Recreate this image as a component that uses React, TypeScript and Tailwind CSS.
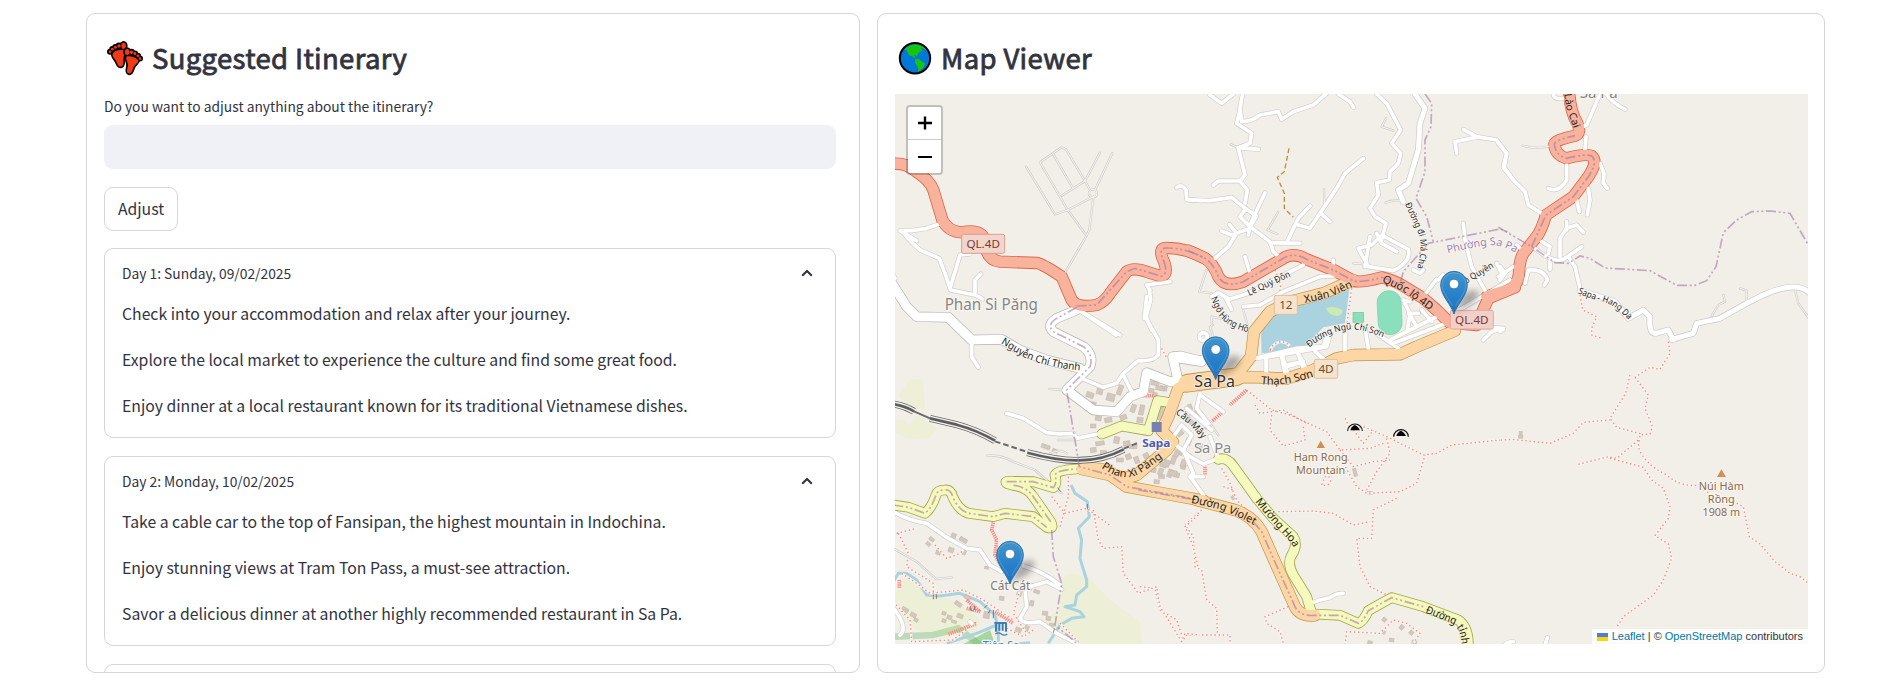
import React from "react";

const SHEETS = {
  nw: [880, 0],
  n: [1190, 80],
  ne: [1500, 0],
  sw: [880, 300],
  s: [1140, 320],
  se: [1480, 340],
} as const;
type Sheet = keyof typeof SHEETS;

const place = (s: Sheet) => `translate(${SHEETS[s][0]} ${SHEETS[s][1]}) scale(0.33333)`;

type Kind = "service" | "minor" | "street" | "major" | "yellow" | "orange" | "plaza" | "trunk";
const KINDS: Record<Kind, { casing: string; fill: string; outer: number; inner: number }> = {
  service: { casing: "#cfcdca", fill: "#f7f6f3", outer: 7, inner: 3 },
  minor: { casing: "#d0cecb", fill: "#ffffff", outer: 15, inner: 11 },
  street: { casing: "#cbc9c7", fill: "#ffffff", outer: 19, inner: 15 },
  major: { casing: "#b5b3b1", fill: "#ffffff", outer: 31, inner: 27 },
  yellow: { casing: "#a3a84c", fill: "#f6f9bd", outer: 32, inner: 27 },
  orange: { casing: "#c19445", fill: "#fcd6a4", outer: 37, inner: 33 },
  plaza: { casing: "#c19445", fill: "#fcd6a4", outer: 56, inner: 51 },
  trunk: { casing: "#d9674c", fill: "#f9b29c", outer: 37, inner: 32 },
};

const ROADS: [Sheet, Kind, string][] = [
  ["nw", "service", "M438,500 L525,643 L563,630 L640,590 M480,487 L563,630 L618,705 M480,487 L545,442 L558,448 L615,543 L545,587 M520,463 L580,567 M615,543 L660,458 M697,460 L645,570 M615,543 L630,570 M627,580 a12,12 0 1 0 24,0 a12,12 0 1 0 -24,0 M640,592 L628,690 L618,710 L555,818"],
  ["sw", "service", "M322,467 Q360,463 400,485 L465,510 L545,580 M508,267 L548,270 M535,420 L590,420 M510,460 Q540,445 560,460 M40,745 L110,785 L168,837 L215,832"],
  ["n", "service", "M265,395 L233,450 L262,462 M402,328 L403,375 M588,115 L575,140 L610,152 M587,368 Q605,360 630,362 M50,570 L28,635 L65,640 M490,550 L535,553 M68,735 L60,740 L75,790 M160,690 L175,745 M123,193 L145,203"],
  ["ne", "service", "M68,437 Q110,450 150,438 M635,948 L655,915 L675,905 L670,885 M720,865 L740,872 L740,900 M885,870 L895,910 L930,960"],
  ["s", "service", "M215,10 L215,-10 L260,0 M235,345 L210,310"],

  ["nw", "minor", "M178,672 L140,685 L95,692 L60,692 L110,722 M68,695 Q90,725 120,750 L178,775 L195,820 L212,870 L285,885 L308,897 M210,865 L240,765 L270,762 M285,885 L285,840 L302,822 M605,935 L720,1005 M810,870 L800,855 L870,845 M808,868 L812,900 L798,950 L815,990 M890,563 Q905,550 918,570 L920,598 L965,602 M40,825 L45,835"],
  ["sw", "minor", "M795,50 L835,120 L835,165 Q820,185 775,182 L730,220 L710,250 L670,262 L605,235 M800,-10 L793,55 M730,225 L755,275 M605,35 L708,105 M380,340 L430,355 L500,398 L540,402 L580,400 L590,415 L655,402 M275,120 L275,170 L295,202 M40,635 Q80,660 140,670 L200,712 L260,745 L300,750 L330,795 L365,815 M430,798 Q490,815 540,855 M545,868 L500,845 L435,865 L440,920 L420,955 Q430,975 480,965 L530,1000 L590,1030 M45,930 Q85,985 60,1005 M270,965 L275,970"],
  ["n", "minor", "M160,30 L150,85 L155,125 Q185,125 210,105 L265,95 L275,118 L310,95 L370,75 L410,40 M140,130 L150,90 M140,130 L185,160 L180,190 L145,203 L205,208 M145,205 L155,245 L165,285 L150,303 L85,303 L70,315 M150,303 L172,330 L165,370 M60,45 L95,70 L130,42 M445,42 L480,65 L490,82 M560,42 L590,70 L632,150 L605,190 L632,220 L625,250 L600,275 L598,300 L560,308 L565,345 L540,385 L555,410 L588,430 L575,480 M820,148 L860,170 L920,180 L950,220 L940,260 L960,285 M858,172 L795,185 L800,220 M-5,360 L60,362 L125,352 L165,385 L200,408 L180,440 L150,410 L168,385 M225,338 L180,435 L175,465 M180,440 L240,485 L250,515 L265,530 M180,445 L125,465 L95,453 M118,433 L140,460 L115,500 L75,535 M240,488 L330,490 M290,488 L325,415 L360,378 M325,435 L360,445 L390,400 L440,325 L465,280 L520,235 M390,398 L420,425 M165,530 L180,580 M118,658 L85,638 L65,650 M105,650 L125,688 M118,658 L175,640 L340,555 M160,680 L210,675 L280,635 L390,590 L465,585 M430,540 L430,570 M525,560 L540,470 M505,505 L545,495 L575,465 L655,508 Q665,545 610,572 L535,560 L505,505 M560,460 L575,490 L620,515 M670,570 L690,580 L700,570 M738,600 L700,650 M745,600 L760,585 M820,430 L825,480 L845,560 L890,640 M790,700 L960,600 M640,660 L660,700 L652,750 M640,662 L660,665 M655,700 L685,700 M695,690 L725,725 M680,740 L660,705 M600,780 L750,705 M610,790 L780,725 M535,805 L525,745 M465,820 L465,745 M560,760 L625,805 M920,550 L935,580 M28,770 a12,12 0 1 0 24,0 a12,12 0 1 0 -24,0 M880,780 L905,755 L940,745 M935,745 L870,740"],
  ["n", "minor", "M195,835 L320,805 L400,800 L410,765 M230,830 L228,885 M275,820 L295,885 M290,860 L340,845 M320,810 L345,860 M370,805 L395,835"],
  ["n", "street", "M675,42 L705,85 L690,130 L685,210 L655,310 L625,330 L640,365"],
  ["n", "street", "M-5,843 L50,833"],
  ["ne", "minor", "M305,270 L260,375 L245,382 M315,275 Q330,305 375,328 M160,280 Q160,300 190,295 M258,410 L255,450 M200,495 L200,540 Q175,580 145,565 M300,490 L312,520 L310,550 L322,565 M265,565 L270,600 L262,645 M230,600 L238,635 M-5,430 L20,460 L12,505 L40,540 L75,575 L85,615 L125,640 M50,735 L80,760 M125,725 L150,740 L145,760 M105,745 Q165,795 195,775 L245,740 M180,770 L180,715 L200,685 L230,675 L250,697 M150,785 L150,808 M200,665 L200,690 M85,810 L75,850 M85,810 Q130,805 143,840 L133,855 M0,800 L15,820 L0,840 M-5,830 L40,800 M205,770 L225,800 L240,865 M0,995 L10,988"],
  ["ne", "street", "M240,872 L300,890 L345,905 L385,955 L430,930 L450,950 Q445,1010 475,998 L505,990 L520,1020 M515,1018 L580,1000 L590,970 L660,955 L740,910 L790,885 Q890,840 930,880"],
  ["s", "minor", "M180,220 L170,265 L205,310 M180,225 L250,275 M140,265 L215,330 M210,350 L235,415 L190,432 L150,410 L105,372 M100,350 L125,315 L155,345 L130,390 L160,460 L150,470 L190,525 M160,470 L190,470 M378,115 L380,165 M425,110 L435,160 M470,90 L490,145 M440,135 L490,125 M350,115 L420,105 L560,80 L570,45 M525,95 L550,115"],
  ["se", "minor", "M70,920 Q80,905 100,905 M195,915 L202,893"],
  ["s", "minor", "M510,850 L540,840 L570,833 Q585,820 610,820"],

  ["nw", "major", "M30,840 L80,920 L110,950 L205,952 L275,1020"],
  ["sw", "major", "M205,52 L275,120 L365,118 L420,150 M420,150 L500,180 L600,205"],
  ["sw", "major", "M590,30 L530,55 Q498,75 520,95 L610,140 Q642,165 630,200 L560,270 L600,300 L640,330 L710,335 L750,290 L790,275 L800,218 L870,245 L895,245 L878,170 L900,168 L960,182"],
  ["s", "major", "M100,112 L185,125"],

  ["sw", "yellow", "M40,615 L85,622 L135,640 Q155,625 168,585 Q172,570 195,570 Q212,568 218,590 Q235,630 265,640 L340,650 L375,640 L460,650 L500,682 Q525,690 512,665 L460,590 Q440,560 400,556 L380,550 Q370,542 400,544 L460,545 L520,563 Q532,550 525,525 Q530,510 590,507"],
  ["sw", "yellow", "M665,402 L725,378 L805,392 L833,302 L870,308"],
  ["s", "yellow", "M235,418 Q260,410 280,438 L350,535 L400,595 L460,650 Q475,675 455,705 Q440,730 460,765 L500,830 L515,880"],
  ["s", "yellow", "M520,882 L600,886 L655,910 Q670,905 685,872 L755,833 L850,860 L955,900 Q985,920 985,975"],

  ["s", "plaza", "M140,190 L290,170"],
  ["sw", "orange", "M605,507 L690,525 L740,560 L860,582 L970,602"],
  ["sw", "orange", "M620,502 L680,510 Q720,545 770,525 L860,450 L878,425 L845,392 L865,350 L895,265 L960,235"],
  ["s", "orange", "M170,540 L285,570 Q340,590 365,635 L420,760 L465,860 Q480,890 525,886"],
  ["s", "orange", "M280,172 L350,172 L440,176 L520,150 L590,115 L640,105 L780,103 L830,80 L945,32"],
  ["n", "orange", "M140,885 L183,830 L192,755 L240,695 L300,665 L400,640 L490,600"],

  ["nw", "trunk", "M20,495 Q70,482 105,512 Q150,540 160,570 L187,660 Q205,695 245,697 Q310,685 315,725 Q318,780 360,785 L470,789 Q485,790 545,830 L575,900 Q590,925 650,915 Q675,905 690,880 L740,815 Q760,800 805,817 L845,829 Q865,820 852,785 Q830,740 865,744 Q920,745 975,775"],
  ["n", "trunk", "M-5,512 L45,535 Q70,550 85,590 Q105,625 160,605 L280,535 Q310,515 350,538 L430,570 L490,602 Q510,610 575,592 Q610,600 640,618 L700,655 L740,690 L775,725"],
  ["n", "trunk", "M780,728 L860,735 L895,655 L975,622"],
  ["ne", "trunk", "M-40,890 L15,872 Q55,860 57,820 Q58,780 70,760 L110,710 Q125,690 138,645 L220,590 L265,530 Q295,485 275,468 Q260,460 200,475 Q165,465 163,432 Q165,420 225,407 Q245,400 232,370 Q210,335 207,270"],
];

const ADMIN: [Sheet, string][] = [
  ["nw", "M590,918 L650,915 L740,815 L765,805 L845,829 Q865,820 852,785 Q830,740 865,744 Q920,745 975,775"],
  ["n", "M-5,512 L45,535 Q70,550 85,590 Q105,625 160,605 L280,535 Q310,515 350,538 L430,570 L490,602 Q510,610 575,592 L630,612 L640,575 L715,490 L930,447 L960,458"],
  ["n", "M705,42 L725,70 L723,140 L705,180 L705,275 L678,355 L710,410 L730,485"],
  ["ne", "M-5,682 L95,740 L165,788 L205,790 L240,768 L270,775 L315,804 L450,812 L530,856 L585,856 L620,842 L648,800 L670,698 L710,660 L755,635 L810,633 L870,640 L925,735"],
  ["ne", "M95,740 L138,645 L220,590 L265,530 Q295,485 275,468 Q260,460 200,475 Q165,465 163,432 Q165,420 225,407"],
  ["sw", "M590,22 L530,55 Q498,75 520,95 L610,140 Q642,165 630,200 L560,270 L598,500 L690,525 L740,560 L960,600"],
  ["sw", "M40,615 L85,622 L135,640 Q155,625 168,585 Q172,570 195,570 Q212,568 218,590 Q235,630 265,640 L340,650 L375,640 L460,650 L500,682 M515,690 L520,770 L545,850 L525,975 L590,1030 M512,665 L460,590 Q440,560 400,556 M380,545 L460,545 L520,563 Q532,550 525,525 Q530,510 590,507"],
  ["s", "M-5,510 L170,540 M340,605 L365,635 L420,760 L465,860 Q480,890 525,886 L600,886 L655,910 Q670,905 685,872 L755,833 L850,860"],
];

const PATHS: [Sheet, string][] = [
  ["n", "M255,570 L272,615 L270,640 M485,625 L475,700 L470,740 M240,815 Q265,765 300,800"],
  ["ne", "M240,885 L248,930 L290,950 L275,985 L275,1005 L305,1015"],
  ["se", "M565,5 L570,40 L540,88 L510,82 L465,112 M450,105 L437,160 L390,235 L410,262 L485,282 M465,112 L505,165 L495,205 L517,260 L510,282 L480,285 L475,320 Q490,370 560,405 Q600,440 650,436 M295,373 L385,350 L410,355 L475,300 M390,355 L490,382 L515,420 L550,445 L570,500 L565,535 L525,587 L565,612 L575,655 L550,720 L520,765 L430,830 L408,865 M770,490 L790,500 L808,590 L840,612 L885,665 L930,700 L960,710 L985,730 M0,305 L95,298 L210,310 L280,280 L310,247 L390,240 M670,450 L690,460"],
  ["s", "M320,210 L395,270 L450,285 L560,335 L600,390 L690,385 L730,370 M345,255 L360,280 L430,270 L500,310 M395,285 L390,330 L430,378 L495,360 L490,320 M615,295 L630,325 L670,320 L740,350 L850,405 L890,400 L935,375 L1080,360 M640,330 L670,370 L700,330 M740,355 L750,400 L710,455 L680,510 M600,390 L640,440 L700,425 L750,420 M610,430 L650,500 L680,520 L780,515 L830,490 L855,405 M770,535 L700,570 L695,655 L650,655 L660,740 L690,800 L740,825 M415,575 L520,573 L580,580 L640,615 L690,605 M245,445 L270,490 L290,540 L320,570 M250,500 L280,510 M185,570 L135,615 L160,650 L165,740 L185,750 L200,840 L230,865 L232,940 M0,800 L45,805 L60,870 L110,900 L130,960 L140,945 L270,945 L270,975 M445,860 L375,890 L380,910 L420,935 L430,970 M615,975 L620,935 L720,940 L760,900 L800,910 L840,940 L820,970 M545,495 Q560,450 572,480 Q570,500 545,495 M65,85 L80,110 M390,90 Q410,50 450,75"],
  ["sw", "M845,145 L858,170 M565,530 L565,590 L540,680 M515,590 L555,640 L620,625 L695,680 M640,630 L655,720 L670,745 L725,740 L730,820 L775,880 L830,860 L840,920 L905,1025 L915,1000 L960,1005 M955,645 L915,680 L940,740 L955,805 M50,700 L110,685 M55,700 L85,760 L80,800 L160,850 L160,890 M65,820 L110,850 L150,880 L250,870 L310,900 L400,960 M40,905 L90,960 L95,1025 L220,1020 L290,965 M165,735 L200,775 L240,760 L260,740 M420,870 L400,940 L440,1000 M540,970 L600,1030 M380,985 L430,1010 L460,990"],
];

const STEPS: [Sheet, string][] = [
  ["sw", "M340,668 L335,690 L350,720 L345,765 L360,790 M205,1003 L290,970 M345,935 L400,970 M58,840 L58,865 M260,900 L300,935 L260,925 M790,287 L820,287"],
  ["s", "M320,210 L270,255 M245,278 L215,305 M195,440 L195,465 M150,280 L160,285 M195,325 L203,318"],
];

const BUILDINGS: [Sheet, number, number, number, number, number][] = [
  ["sw", 630, 285, 22, 16, 20], ["sw", 660, 270, 18, 26, 12], ["sw", 692, 292, 24, 22, 15], ["sw", 640, 312, 16, 12, 10], ["sw", 720, 270, 14, 30, 20],
  ["sw", 655, 355, 18, 14, 10], ["sw", 685, 360, 22, 14, -10], ["sw", 640, 378, 16, 12, 0], ["sw", 730, 352, 20, 14, -20], ["sw", 760, 325, 14, 24, 20],
  ["sw", 785, 330, 14, 30, 12], ["sw", 780, 360, 18, 16, 8], ["sw", 825, 250, 24, 12, 10], ["sw", 850, 265, 22, 14, 10], ["sw", 815, 272, 14, 12, 10],
  ["sw", 660, 430, 26, 12, -8], ["sw", 640, 450, 18, 14, -8], ["sw", 670, 458, 18, 12, 0], ["sw", 710, 420, 16, 20, 10], ["sw", 740, 430, 20, 14, -10],
  ["sw", 745, 470, 16, 16, -20], ["sw", 770, 480, 14, 20, -20], ["sw", 760, 440, 22, 12, 0], ["sw", 800, 470, 16, 22, -30], ["sw", 720, 480, 20, 12, 0],
  ["sw", 820, 510, 16, 14, 10], ["sw", 850, 495, 20, 14, 20], ["sw", 870, 520, 14, 24, 20], ["sw", 845, 530, 18, 12, 0], ["sw", 880, 480, 14, 26, 20],
  ["sw", 900, 455, 18, 20, 20], ["sw", 910, 500, 14, 16, 20], ["sw", 890, 525, 16, 14, 10], ["sw", 925, 470, 14, 20, 20], ["sw", 830, 545, 16, 12, 5],
  ["sw", 497, 440, 26, 12, 20], ["sw", 525, 452, 16, 10, 20], ["sw", 840, 340, 16, 40, 12],
  ["s", 120, 340, 20, 14, -35], ["s", 148, 300, 14, 30, -40], ["s", 172, 280, 14, 22, -40], ["s", 110, 400, 14, 20, 20], ["s", 80, 430, 18, 20, 20],
  ["s", 130, 430, 14, 22, 20], ["s", 100, 460, 22, 16, 10], ["s", 62, 455, 14, 20, 20], ["s", 180, 380, 14, 22, 20], ["s", 145, 365, 16, 20, 20],
  ["s", 150, 262, 12, 18, -20], ["s", 60, 205, 26, 12, 10], ["s", 45, 225, 12, 14, 10], ["s", 90, 360, 14, 14, 0],
  ["s", 645, 457, 10, 24, -15], ["s", 690, 519, 14, 9, 0], ["s", 280, 532, 12, 12, 45], ["s", 733, 899, 12, 12, 40], ["s", 785, 922, 12, 14, 40],
  ["s", 814, 938, 12, 12, 40], ["s", 755, 960, 14, 10, 10], ["s", 730, 936, 12, 10, 30], ["s", 690, 968, 14, 10, 10], ["s", 823, 966, 14, 10, 10],
  ["sw", 155, 718, 16, 10, 40], ["sw", 145, 732, 14, 10, 40], ["sw", 220, 710, 14, 20, 20], ["sw", 250, 720, 24, 12, 30], ["sw", 175, 757, 14, 14, 20],
  ["sw", 213, 750, 16, 14, 20], ["sw", 253, 757, 10, 14, 20], ["sw", 320, 803, 12, 8, 10], ["sw", 192, 940, 12, 10, 20], ["sw", 208, 952, 14, 12, 20],
  ["sw", 240, 948, 18, 12, 20], ["sw", 192, 962, 12, 10, 20], ["sw", 222, 965, 16, 8, 20], ["sw", 75, 930, 20, 14, 30], ["sw", 100, 945, 18, 12, 30],
  ["sw", 108, 960, 12, 10, 30], ["sw", 235, 912, 22, 12, 35], ["sw", 262, 892, 20, 12, 35], ["sw", 320, 945, 18, 20, 10], ["sw", 418, 880, 14, 16, 20],
  ["sw", 450, 860, 12, 22, 10], ["sw", 470, 875, 18, 10, 20], ["sw", 455, 910, 12, 16, 10], ["sw", 495, 940, 16, 12, 10], ["sw", 505, 955, 14, 12, 10],
  ["sw", 415, 990, 18, 14, 20], ["sw", 440, 985, 12, 16, 20], ["sw", 515, 975, 14, 10, 10], ["sw", 365, 895, 14, 12, 10],
  ["se", 122, 279, 9, 9, 0], ["se", 122, 290, 13, 9, 0],
];

type Label = { s: Sheet; d: string; t: string; size: number; len: number; color?: string; halo?: string };
const CURVED: Label[] = [
  { s: "sw", d: "M362,130 Q395,150 425,168 Q500,205 625,213", t: "Nguyễn Chí Thanh", size: 31, len: 255 },
  { s: "sw", d: "M664,503 Q730,550 780,520 Q815,500 870,454", t: "Phan Xi Păng", size: 32, len: 208, halo: "#fcd6a4" },
  { s: "s", d: "M152,548 L240,568 Q300,590 365,628", t: "Đường Violet", size: 33, len: 203, halo: "#fcd6a4" },
  { s: "s", d: "M345,545 L400,610 L450,665 L480,710", t: "Mường Hoa", size: 33, len: 182, halo: "#f6f9bd" },
  { s: "s", d: "M855,878 L935,910 Q968,922 966,1010", t: "Đường tỉnh", size: 32, len: 160, halo: "#f6f9bd" },
  { s: "s", d: "M362,192 Q440,202 535,164", t: "Thạch Sơn", size: 33, len: 162, halo: "#fcd6a4" },
  { s: "s", d: "M106,280 L150,315 L195,366", t: "Cầu Mây", size: 29, len: 112 },
  { s: "n", d: "M345,670 L420,652 L500,616", t: "Xuân Viên", size: 33, len: 152, halo: "#fcd6a4" },
  { s: "n", d: "M178,648 L240,618 L315,583", t: "Lê Quý Đôn", size: 27, len: 138 },
  { s: "n", d: "M575,605 L640,635 L735,702", t: "Quốc lộ 4D", size: 33, len: 170, halo: "#f9b29c" },
  { s: "n", d: "M62,655 L85,705 Q120,750 190,759", t: "Ngô Hùng Hồ", size: 28, len: 160 },
  { s: "n", d: "M358,803 Q420,750 490,748 Q540,752 590,778", t: "Đường Ngũ Chỉ Sơn", size: 27, len: 238 },
  { s: "n", d: "M645,372 L680,450 Q705,500 676,580", t: "Đường đi Má Cha", size: 27, len: 202 },
  { s: "n", d: "M828,612 L925,554", t: "ồ Quyền", size: 27, len: 98 },
  { s: "n", d: "M773,520 Q860,498 910,495 Q950,498 1020,545", t: "Phường Sa Pa", size: 32, len: 211, color: "#9f7fae" },
  { s: "ne", d: "M233,880 L290,902 Q340,905 395,970", t: "Sapa - Hang Da", size: 27, len: 176 },
  { s: "ne", d: "M193,282 L198,320 L226,400", t: "Lào Cai", size: 31, len: 108, halo: "#f9b29c" },
];

type Flat = { s: Sheet; x: number; y: number; t: string; size: number; len: number; color: string; bold?: boolean; halo?: number };
const FLAT: Flat[] = [
  { s: "nw", x: 334, y: 931, t: "Phan Si Păng", size: 47, len: 280, color: "#858585" },
  { s: "ne", x: 296, y: 295, t: "Sa Pa", size: 47, len: 114, color: "#858585" },
  { s: "s", x: 224, y: 200, t: "Sa Pa", size: 49, len: 122, color: "#332f2a", halo: 5 },
  { s: "s", x: 218, y: 399, t: "Sa Pa", size: 45, len: 112, color: "#8a8a8a" },
  { s: "s", x: 49, y: 381, t: "Sapa", size: 34, len: 84, color: "#4a5ab5", bold: true },
  { s: "s", x: 542, y: 422, t: "Ham Rong", size: 34, len: 162, color: "#8b6a48" },
  { s: "s", x: 542, y: 462, t: "Mountain", size: 34, len: 148, color: "#8b6a48" },
  { s: "se", x: 724, y: 450, t: "Núi Hàm", size: 34, len: 135, color: "#8b6a48" },
  { s: "se", x: 724, y: 489, t: "Rồng", size: 34, len: 81, color: "#8b6a48" },
  { s: "se", x: 724, y: 529, t: "1908 m", size: 34, len: 113, color: "#8b6a48" },
  { s: "sw", x: 391, y: 870, t: "Cát Cát", size: 38, len: 120, color: "#7c7c7c" },
  { s: "sw", x: 363, y: 1046, t: "Tiên Sa", size: 33, len: 110, color: "#4a7fb5" },
];

const SHIELDS: [Sheet, number, number, number, number, string, string, string, string][] = [
  ["nw", 245, 703, 129, 57, "QL.4D", "#f2d5cd", "#d9a08c", "#7a3a30"],
  ["n", 781, 691, 129, 56, "QL.4D", "#f2d0ca", "#e3a99c", "#7a3a30"],
  ["n", 253, 646, 69, 57, "12", "#f5e3cd", "#dcc19b", "#6f4d28"],
  ["n", 373, 838, 70, 57, "4D", "#f5e3cd", "#dcc19b", "#6f4d28"],
];

function Pin({ x, y }: { x: number; y: number }) {
  return (
    <g transform={`translate(${x} ${y}) scale(0.33333)`}>
      <path d="M2,-4 L26,-58 Q50,-78 74,-66 Q78,-50 48,-26 Z" fill="#000" opacity="0.3" filter="url(#soft)" />
      <path d="M0,0 C-8,-28 -40,-55 -40,-88 A40,40 0 0 1 40,-88 C40,-55 8,-28 0,0 Z" fill="url(#pin)" stroke="#2c72ab" strokeWidth="3" />
      <path d="M-5,-25 C-14,-45 -36,-64 -36,-88 A36,36 0 0 1 36,-88 C36,-64 14,-45 5,-25" fill="none" stroke="#fff" strokeOpacity="0.18" strokeWidth="3" />
      <circle cx="0" cy="-90" r="14.5" fill="#fff" stroke="#2b74ae" strokeWidth="2.5" />
    </g>
  );
}

function Cave({ x, y }: { x: number; y: number }) {
  return (
    <g transform={`translate(${x} ${y})`}>
      <path d="M-14,8 Q-11,-4 0,-8 Q10,-4 15,8 Z" fill="#000" />
      <path d="M-22,10 A22,21 0 0 1 22,10" fill="none" stroke="#111" strokeWidth="3.4" />
    </g>
  );
}

function MapCanvas() {
  return (
    <svg className="block h-[550px] w-[913px]" viewBox="895 94 913 550" fontFamily="'Noto Sans', sans-serif">
      <defs>
        <linearGradient id="pin" x1="0" y1="0" x2="0" y2="1">
          <stop offset="0" stopColor="#4296cc" />
          <stop offset="0.55" stopColor="#2880c8" />
          <stop offset="1" stopColor="#1f74c4" />
        </linearGradient>
        <filter id="soft" x="-50%" y="-50%" width="200%" height="200%">
          <feGaussianBlur stdDeviation="10" />
        </filter>
      </defs>
      <rect x="895" y="94" width="913" height="550" fill="#f2efe9" />

      <g transform={place("sw")}>
        <g fill="#edf0d6">
          <path d="M90,238 L128,238 L136,325 L85,328 L55,285 Z" />
          <path d="M45,360 L75,360 L90,378 L110,345 L172,385 L150,415 L90,418 L45,400 Z" />
          <path d="M550,830 L580,820 L630,835 L690,900 L780,965 L787,1032 L600,1032 L495,970 L540,920 Z" />
          <path d="M45,880 L75,835 L130,870 L180,890 L240,905 L300,960 L290,1000 L180,1010 L110,990 L45,940 Z" />
        </g>
        <path d="M250,1032 L330,990 L345,1032 Z" fill="#a8d6a0" />
        <path d="M40,1010 L160,1005 L235,985 L300,1035" fill="none" stroke="#6fbf73" strokeOpacity="0.4" strokeWidth="20" />
        <g fill="none" stroke="#aad3df" strokeWidth="9" strokeLinejoin="round">
          <path d="M573,555 L585,580 L622,605 L628,650 L595,685 L605,720 L600,775 L620,840 L620,860 L590,885 L585,915 L555,920 L600,935 L612,950 L575,955 L540,975 L505,1030" />
          <path d="M40,845 L55,820 L80,820 L110,840 L140,885 L180,888 L240,880 L300,905 L345,945 L355,990 L355,1035 M350,975 L290,1000 L200,1030 M380,1035 L450,1028" />
        </g>
      </g>

      <g transform={place("n")}>
        <path d="M213,762 L235,705 L300,678 L478,628 L465,730 L400,742 L350,795 L325,808 L215,820 Z" fill="#aad3df" />
        <path d="M408,685 Q430,675 457,690 Q460,705 440,708 Q415,705 408,685 Z" fill="#cdebb0" />
        <rect x="563" y="632" width="72" height="132" rx="35" fill="#8adfbd" stroke="#7ccfad" strokeWidth="2" transform="rotate(-3 599 698)" />
        <rect x="489" y="697" width="32" height="30" fill="#8adfbd" stroke="#6fc7a3" strokeWidth="2" />
      </g>

      {BUILDINGS.map(([s, x, y, w, h, r], i) => (
        <g key={i} transform={place(s)}>
          <rect x={x - w / 2} y={y - h / 2} width={w} height={h} fill="#d3c8bd" stroke="#c2b5a9" strokeWidth="1.5" transform={`rotate(${r} ${x} ${y})`} />
        </g>
      ))}

      {PATHS.map(([s, d], i) => (
        <g key={i} transform={place(s)} fill="none" strokeLinejoin="round">
          <path d={d} stroke="#f8f4f0" strokeWidth="7" />
          <path d={d} stroke="#fa8e82" strokeWidth="4.2" strokeDasharray="4.4 8" />
        </g>
      ))}
      {STEPS.map(([s, d], i) => (
        <g key={i} transform={place(s)}>
          <path d={d} fill="none" stroke="#fb8d82" strokeWidth="11" strokeDasharray="4 2.5" />
        </g>
      ))}
      <g transform={place("n")}>
        <path d="M297,205 L283,275 L262,292 L283,340 L283,385 L310,412" fill="none" stroke="#bb9138" strokeWidth="4" strokeDasharray="15 8" />
      </g>

      {ROADS.map(([s, k, d], i) => (
        <g key={i} transform={place(s)}>
          <path d={d} fill="none" stroke={KINDS[k].casing} strokeWidth={KINDS[k].outer} strokeLinecap="round" strokeLinejoin="round" />
        </g>
      ))}
      {ROADS.map(([s, k, d], i) => (
        <g key={i} transform={place(s)}>
          <path d={d} fill="none" stroke={KINDS[k].fill} strokeWidth={KINDS[k].inner} strokeLinecap="round" strokeLinejoin="round" />
        </g>
      ))}

      <g transform={place("sw")} fill="none">
        {["M40,312 Q75,318 102,334", "M150,355 L230,374 Q290,390 345,422", "M442,458 Q540,484 600,481 Q670,480 731,448"].map((d) => (
          <g key={d}>
            <path d={d} stroke="#686868" strokeWidth="21" />
            <path d={d} stroke="#f4f2ee" strokeWidth="16" />
            <path d={d} stroke="#5d5d5d" strokeWidth="8" />
          </g>
        ))}
        <path d="M102,334 L150,355" stroke="#6b6b6b" strokeWidth="6" />
        <path d="M345,424 L442,456 M731,446 L778,427" stroke="#6b6b6b" strokeWidth="6" strokeDasharray="17 9" />
      </g>

      {ADMIN.map(([s, d], i) => (
        <g key={i} transform={place(s)}>
          <path d={d} fill="none" stroke="#a077a6" strokeOpacity="0.6" strokeWidth="5" strokeDasharray="30 8 6 8 6 8" />
        </g>
      ))}

      <g transform={place("s")}>
        <rect x="35" y="306" width="30" height="30" fill="#7981b0" />
        <path d="M542,362 L555,384 L530,384 Z" fill="#d08f55" />
        <Cave x={645} y={323} />
        <Cave x={783} y={340} />
      </g>
      <g transform={place("se")}>
        <path d="M724,388 L738,411 L711,411 Z" fill="#d08f55" />
      </g>
      <g transform={place("sw")} fill="none" stroke="#3f7fb8" strokeWidth="6">
        <path d="M343,969 L380,969 M348,969 L348,995 M358,969 L358,992 M368,969 L368,992 M378,969 L378,995" />
        <path d="M346,1002 q9,-7 18,0 t18,0" strokeWidth="4" />
      </g>
      <g transform={place("sw")} fill="none" stroke="#666" strokeWidth="2.5">
        <path d="M160,884 L160,898 M169,883 L169,897 M272,918 L272,930 L278,932 M284,918 L284,930 M312,925 L322,915 M330,930 L325,940 M340,930 L340,955 M524,985 L520,998 M622,612 L622,628 M533,563 L542,575" />
      </g>

      {CURVED.map((l, i) => (
        <g key={l.t} transform={place(l.s)}>
          <path id={`way-${i}`} d={l.d} fill="none" />
          <text fontSize={l.size} fill={l.color ?? "#262220"} stroke={l.halo ?? "#fbfaf8"} strokeWidth="4" strokeLinejoin="round" paintOrder="stroke">
            <textPath href={`#way-${i}`} textLength={l.len} lengthAdjust="spacingAndGlyphs">{l.t}</textPath>
          </text>
        </g>
      ))}
      {FLAT.map((l, i) => (
        <g key={i} transform={place(l.s)}>
          <text x={l.x - l.len / 2} y={l.y} fontSize={l.size} fontWeight={l.bold ? 700 : 400} fill={l.color} textLength={l.len} lengthAdjust="spacingAndGlyphs" stroke="#f8f6f2" strokeWidth={l.halo ?? 7} strokeLinejoin="round" paintOrder="stroke">
            {l.t}
          </text>
        </g>
      ))}
      {SHIELDS.map(([s, x, y, w, h, t, bg, line, ink], i) => (
        <g key={i} transform={place(s)}>
          <rect x={x} y={y} width={w} height={h} rx="5" fill={bg} stroke={line} strokeWidth="3" />
          <text x={x + w / 2} y={y + h / 2 + 14} textAnchor="middle" fontSize="35" fill={ink}>
            {t}
          </text>
        </g>
      ))}

      <Pin x={1010} y={584} />
      <Pin x={1215.7} y={379.5} />
      <Pin x={1454} y={314} />
    </svg>
  );
}

function Feet() {
  const left = (
    <>
      <path d="M5.8,12.5 C8,9.5 12,8.6 17,9.4 C18.8,12 16.2,15 16.4,18.5 C16.6,21.5 16.6,25 13.8,25.6 C10.8,26 10.4,22 8.8,19.5 C7,17 4.8,15 5.8,12.5 Z" />
      <ellipse cx="16.6" cy="4.8" rx="2.3" ry="3.1" />
      <circle cx="12" cy="4.9" r="1.7" />
      <circle cx="8.4" cy="6.2" r="1.5" />
      <circle cx="5.3" cy="8.2" r="1.4" />
      <circle cx="3" cy="10.8" r="1.3" />
    </>
  );
  const right = (
    <>
      <path d="M19.4,15.6 C23,14.6 28,15.6 31.4,19.2 C31.6,22 27.4,23.6 26.4,26.6 C25.4,29.6 24.6,33 21.8,32.4 C19,31.6 20.2,28.2 20.8,25.4 C21.6,21.6 18.4,19.2 19.4,15.6 Z" />
      <ellipse cx="20.2" cy="11" rx="2.3" ry="3" />
      <circle cx="24.4" cy="11.2" r="1.7" />
      <circle cx="27.9" cy="12.6" r="1.5" />
      <circle cx="30.9" cy="14.8" r="1.4" />
      <circle cx="33" cy="17.6" r="1.3" />
    </>
  );
  return (
    <svg className="mt-[2px] h-9 w-9 overflow-visible" viewBox="0 0 36 36" strokeLinejoin="round">
      <g fill="#000" stroke="#000" strokeWidth="3.4">{left}</g>
      <g fill="#f03a17">{left}</g>
      <g fill="#000" stroke="#000" strokeWidth="3.4">{right}</g>
      <g fill="#f03a17">{right}</g>
    </svg>
  );
}

function Globe() {
  return (
    <svg className="mt-[2px] h-9 w-9" viewBox="0 0 36 36">
      <circle cx="18" cy="17.3" r="15.2" fill="#0078d7" stroke="#000" strokeWidth="2" />
      <path d="M7.5,8.6 Q12,3.6 18,3.4 Q25,3.6 29,8.8 L27.5,8.4 L24,6.5 L25,9.5 L21,12.5 L20,15 L17,13.8 L18.5,17.5 L15.5,15.5 L12.5,14.5 L9.5,9.2 Z" fill="#16c60c" />
      <path d="M18,18.4 L22,17.8 L24,20 L28,22.4 Q27.6,26 24,28.8 L21.5,30.4 L20.6,25.5 L18,22 Z" fill="#16c60c" />
    </svg>
  );
}

const BODY = "font-['Noto_Sans_CJK_SC',sans-serif]";
const HEADING = "mb-[2px] whitespace-nowrap text-[27.5px] font-normal leading-[34px] tracking-[0.34px] [-webkit-text-stroke:0.8px_#31333f]";

function Day({ title, items }: { title: string; items: string[] }) {
  return (
    <section className="h-[190px] shrink-0 rounded-[9px] border border-[#d5d6d8] px-[17px]">
      <header className="flex h-[50px] items-center justify-between pr-1">
        <h2 className="mb-[2px] text-[13.8px]">{title}</h2>
        <svg className="mb-[2px] h-[10px] w-[14px]" viewBox="0 0 14 10" fill="none" stroke="#31333f" strokeWidth="2.1">
          <path d="M2.2 7.8 L7 3 L11.8 7.8" />
        </svg>
      </header>
      {items.map((t) => (
        <p key={t} className="flex h-[46px] items-start whitespace-nowrap text-[15.77px] leading-[29px]">{t}</p>
      ))}
    </section>
  );
}

export default function App() {
  return (
    <main className={`flex h-[697px] gap-[17px] overflow-hidden bg-white pl-[86px] pt-[13px] text-[#31333f] ${BODY}`}>
      <section className="flex h-[660px] w-[774px] flex-col overflow-hidden rounded-[9px] border border-[#d5d6d8] pl-[17px] pr-[23px]">
        <div className="mt-[26px] flex h-[36px] shrink-0 items-center gap-[9px] pl-[3px]">
          <Feet />
          <h1 className={HEADING}>Suggested Itinerary</h1>
        </div>
        <label className="mt-[18px] h-6 shrink-0 text-[13.8px] leading-6">Do you want to adjust anything about the itinerary?</label>
        <input className="mt-[7px] h-11 w-full shrink-0 rounded-[9px] bg-[#f0f1f6] outline-none" />
        <button className="mt-[18px] h-11 w-[74px] shrink-0 rounded-[9px] border border-[#d5d6d8] text-[15.77px]">Adjust</button>
        <div className="mt-[17px] flex flex-col gap-[18px]">
          <Day title="Day 1: Sunday, 09/02/2025" items={["Check into your accommodation and relax after your journey.", "Explore the local market to experience the culture and find some great food.", "Enjoy dinner at a local restaurant known for its traditional Vietnamese dishes."]} />
          <Day title="Day 2: Monday, 10/02/2025" items={["Take a cable car to the top of Fansipan, the highest mountain in Indochina.", "Enjoy stunning views at Tram Ton Pass, a must-see attraction.", "Savor a delicious dinner at another highly recommended restaurant in Sa Pa."]} />
          <Day title="" items={[]} />
        </div>
      </section>

      <section className="flex h-[660px] w-[948px] flex-col rounded-[9px] border border-[#d5d6d8] pl-[17px]">
        <div className="mt-[26px] flex h-[36px] items-center gap-2 pl-[2px]">
          <Globe />
          <h1 className={HEADING}>Map Viewer</h1>
        </div>
        <div className="relative mt-[18px] h-[550px] w-[913px] overflow-hidden">
          <MapCanvas />
          <div className="absolute left-[11px] top-[11px] flex h-[70px] w-[37px] flex-col overflow-hidden rounded border-2 border-black/20 bg-white bg-clip-padding text-black">
            <button className="flex h-[33px] items-center justify-center border-b border-[#ccc]">
              <svg className="h-4 w-4" viewBox="0 0 16 16" stroke="#000" strokeWidth="2.4"><path d="M1 8H15M8 1.5V14.5" /></svg>
            </button>
            <button className="flex h-[33px] items-center justify-center">
              <svg className="h-4 w-4" viewBox="0 0 16 16" stroke="#000" strokeWidth="2.2"><path d="M1 8H15" /></svg>
            </button>
          </div>
          <div className="absolute bottom-0 right-0 flex h-[15px] items-center whitespace-nowrap bg-white/80 px-[5px] font-['Liberation_Sans',sans-serif] text-[11px] text-[#333]">
            <svg className="mr-1 h-2 w-[11px]" viewBox="0 0 12 8" preserveAspectRatio="none"><path fill="#4c7be1" d="M0 0h12v4H0z" /><path fill="#ffd500" d="M0 4h12v4H0z" /></svg>
            <span className="text-[#0078a8]">Leaflet</span>
            <span className="whitespace-pre"> | © </span>
            <span className="text-[#0078a8]">OpenStreetMap</span>
            <span className="whitespace-pre"> contributors</span>
          </div>
        </div>
      </section>
    </main>
  );
}
